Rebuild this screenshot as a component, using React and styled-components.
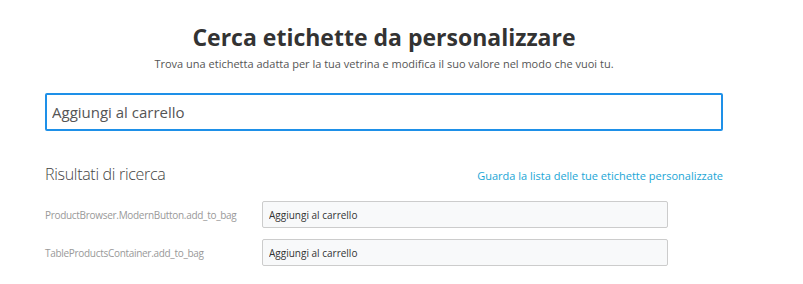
import React, { useState, useEffect, useRef } from 'react';
import styled, { createGlobalStyle } from 'styled-components';

const GlobalStyle = createGlobalStyle`
  body {
    margin: 0;
    background: #fff;
    font-family: "Open Sans", "Liberation Sans", sans-serif;
  }
`;

const Page = styled.div`
  width: 678px;
  padding: 21px 0 0 45px;
`;

const Header = styled.div`
  text-align: center;
`;

const Title = styled.h1`
  margin: 0;
  font-size: 23px;
  line-height: 32px;
  font-weight: 700;
  color: #333;
`;

const Subtitle = styled.p`
  margin: 3px 0 0;
  font-size: 11px;
  line-height: 16px;
  color: #555;
`;

const SearchInput = styled.input`
  box-sizing: border-box;
  display: block;
  width: 100%;
  height: 38px;
  margin-top: 21px;
  padding: 0 5px;
  border: 2px solid #1e90e8;
  border-radius: 2px;
  outline: none;
  font-family: inherit;
  font-size: 15px;
  color: #555;
  caret-color: #333;
`;

const ResultsHead = styled.div`
  display: flex;
  justify-content: space-between;
  align-items: baseline;
  margin-top: 32px;
`;

const ResultsTitle = styled.h2`
  margin: 0;
  font-size: 16px;
  font-weight: 300;
  letter-spacing: -0.3px;
  color: #444;
`;

const ListLink = styled.a`
  font-size: 11px;
  color: #1aa6d6;
  text-decoration: none;
  cursor: pointer;
`;

const Rows = styled.div`
  display: flex;
  flex-direction: column;
  gap: 11px;
  margin-top: 16px;
`;

const Row = styled.div`
  display: flex;
  align-items: center;
`;

const Key = styled.span`
  width: 217px;
  font-size: 10px;
  letter-spacing: -0.3px;
  color: #999;
`;

const ValueInput = styled.input`
  box-sizing: border-box;
  width: 406px;
  height: 27px;
  padding: 0 6px;
  border: 1px solid #ccc;
  border-radius: 2px;
  background: #f8f9fa;
  font-family: inherit;
  font-size: 10px;
  color: #333;
  outline: none;
`;

const results = [
  { key: 'ProductBrowser.ModernButton.add_to_bag', value: 'Aggiungi al carrello' },
  { key: 'TableProductsContainer.add_to_bag', value: 'Aggiungi al carrello' },
];

export default function App() {
  const [query, setQuery] = useState('Aggiungi al carrello');
  const searchRef = useRef(null);

  // cursore alla fine del testo, come nella ricerca attiva
  useEffect(() => {
    const el = searchRef.current;
    if (el) {
      el.focus();
      el.setSelectionRange(el.value.length, el.value.length);
    }
  }, []);

  return (
    <>
      <GlobalStyle />
      <Page>
        <Header>
          <Title>Cerca etichette da personalizzare</Title>
          <Subtitle>
            Trova una etichetta adatta per la tua vetrina e modifica il suo valore nel modo che vuoi tu.
          </Subtitle>
        </Header>
        <SearchInput ref={searchRef} value={query} onChange={e => setQuery(e.target.value)} />
        <ResultsHead>
          <ResultsTitle>Risultati di ricerca</ResultsTitle>
          <ListLink>Guarda la lista delle tue etichette personalizzate</ListLink>
        </ResultsHead>
        <Rows>
          {results.map(r => (
            <Row key={r.key}>
              <Key>{r.key}</Key>
              <ValueInput defaultValue={r.value} />
            </Row>
          ))}
        </Rows>
      </Page>
    </>
  );
}
